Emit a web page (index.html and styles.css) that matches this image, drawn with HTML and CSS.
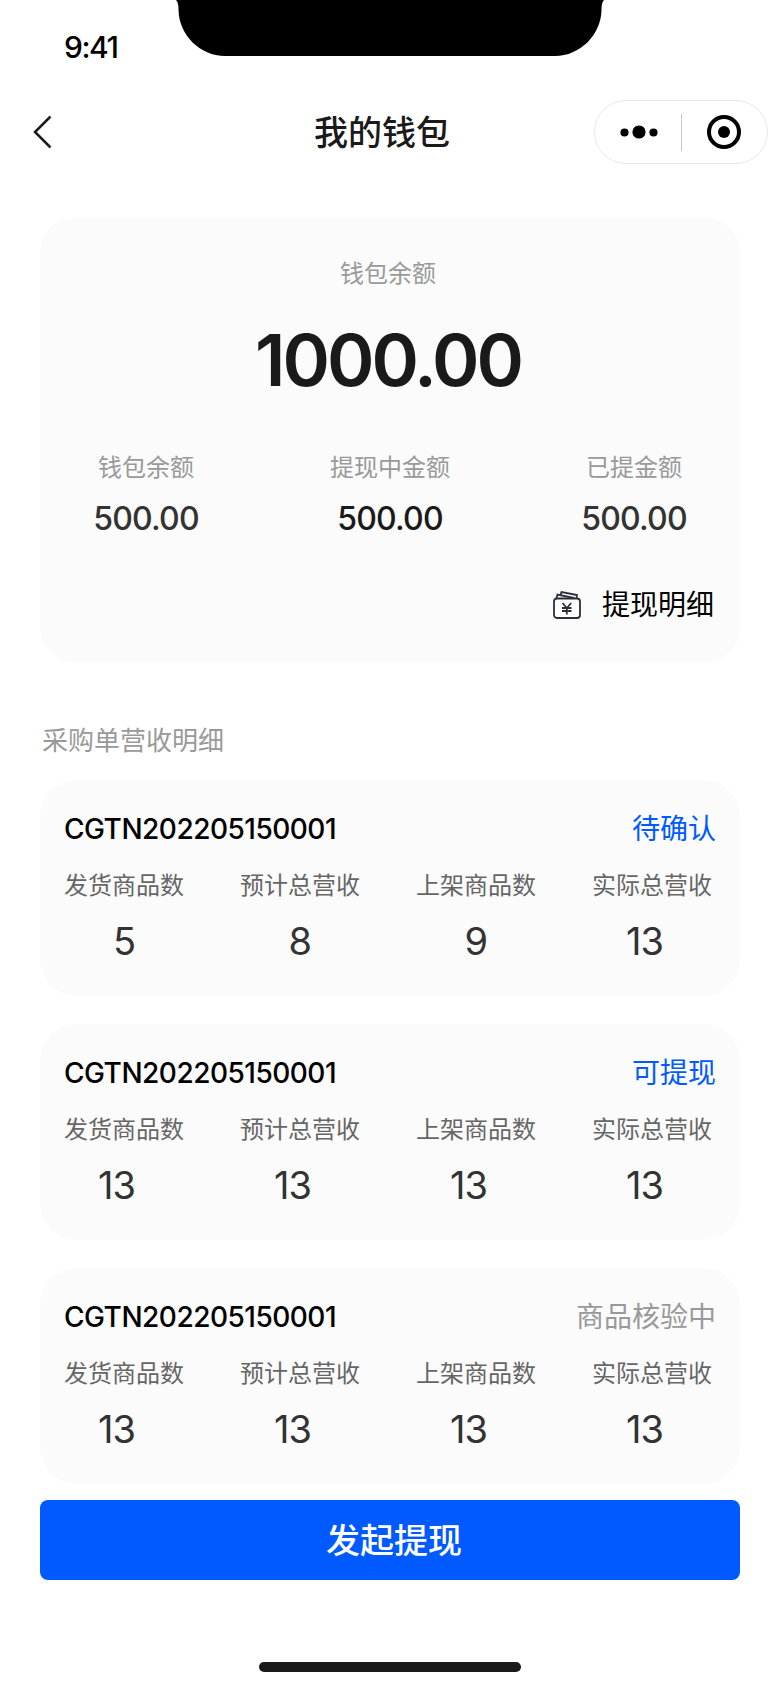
FILE: index.html
```
<!DOCTYPE html>
<html lang="zh-CN">
<head>
    <meta charset="UTF-8">
    <meta name="viewport" content="width=device-width, initial-scale=1.0">
    <title>我的钱包</title>
    <link rel="stylesheet" href="styles.css">
</head>
<body>
    <div class="status-bar">
        <div class="time">9:41</div>
        <svg class="notch" width="428" height="56" viewBox="0 0 428 56">
            <path d="M0 0C2 2 2.500 5 2.500 10C3 35 24 56 49 56H379C404 56 425 35 425.500 10C425.500 5 426 2 428 0Z" fill="#000"/>
        </svg>
    </div>

    <div class="navbar">
        <svg class="back" width="20" height="36" viewBox="0 0 20 36">
            <path d="M17.500 2.500L2 18L17.500 33.500" fill="none" stroke="#1a1a1a" stroke-width="2.500"/>
        </svg>
        <h1>我的钱包</h1>
        <div class="capsule">
            <svg width="38" height="14" viewBox="0 0 38 14">
                <circle cx="4.500" cy="7.500" r="4.100"/>
                <circle cx="19" cy="7" r="6.600"/>
                <circle cx="33.500" cy="7.500" r="4.100"/>
            </svg>
            <div class="line"></div>
            <svg width="36" height="36" viewBox="0 0 36 36">
                <circle cx="18" cy="18" r="15" fill="none" stroke="#000" stroke-width="4"/>
                <circle cx="18" cy="18" r="6"/>
            </svg>
        </div>
    </div>

    <div class="wallet">
        <div class="total">
            <div class="label">钱包余额</div>
            <div class="balance">1000.00</div>
        </div>
        <div class="amounts">
            <div class="amount">
                <div class="label">钱包余额</div>
                <div class="money">500.00</div>
            </div>
            <div class="amount">
                <div class="label">提现中金额</div>
                <div class="money dark">500.00</div>
            </div>
            <div class="amount">
                <div class="label">已提金额</div>
                <div class="money">500.00</div>
            </div>
        </div>
        <div class="detail-link">
            <svg width="28" height="28" viewBox="0 0 28 28" fill="none" stroke="#2b2f38" stroke-width="1.800">
                <rect x="1" y="7.500" width="26" height="19.500" rx="3" fill="#fff"/>
                <path d="M3.500 7L4.500 3.500L21 7M7.500 4L8.500 1L24 4L23.500 7"/>
                <path d="M9.500 12L13.800 17L18.200 12M9 17H18.500M9 20H18.500M13.800 17V23.500"/>
            </svg>
            <span>提现明细</span>
        </div>
    </div>

    <div class="section-title">采购单营收明细</div>

    <div class="order">
        <div class="order-head">
            <div class="order-no">CGTN202205150001</div>
            <div class="state">待确认</div>
        </div>
        <div class="stats">
            <div class="stat">发货商品数<div class="num">5</div></div>
            <div class="stat">预计总营收<div class="num">8</div></div>
            <div class="stat">上架商品数<div class="num">9</div></div>
            <div class="stat">实际总营收<div class="num">13</div></div>
        </div>
    </div>

    <div class="order">
        <div class="order-head">
            <div class="order-no">CGTN202205150001</div>
            <div class="state">可提现</div>
        </div>
        <div class="stats">
            <div class="stat">发货商品数<div class="num">13</div></div>
            <div class="stat">预计总营收<div class="num">13</div></div>
            <div class="stat">上架商品数<div class="num">13</div></div>
            <div class="stat">实际总营收<div class="num">13</div></div>
        </div>
    </div>

    <div class="order">
        <div class="order-head">
            <div class="order-no">CGTN202205150001</div>
            <div class="state checking">商品核验中</div>
        </div>
        <div class="stats">
            <div class="stat">发货商品数<div class="num">13</div></div>
            <div class="stat">预计总营收<div class="num">13</div></div>
            <div class="stat">上架商品数<div class="num">13</div></div>
            <div class="stat">实际总营收<div class="num">13</div></div>
        </div>
    </div>

    <button class="withdraw">发起提现</button>
    <div class="home-bar"></div>
</body>
</html>
```
FILE: styles.css
```
* {
    box-sizing: border-box;
}

body {
    margin: 0;
    width: 780px;
    height: 1688px;
    overflow: hidden;
    background-color: #fff;
    color: #1a1a1a;
    font-family: Inter, "Noto Sans CJK SC", sans-serif;
}

.status-bar {
    display: flex;
    height: 88px;
}

.time {
    width: 176px;
    padding: 29px 0 0 64px;
    font-size: 30px;
    font-weight: 500;
    line-height: 36px;
    letter-spacing: -1.5px;
    color: #000;
}

.notch {
    display: block;
}

/* nav */
.navbar {
    display: grid;
    grid-template-columns: 186px 1fr 186px;
    align-items: center;
    height: 88px;
}

.back {
    margin-left: 33px;
}

h1 {
    margin: 2px 0 0;
    padding-right: 16px;
    font-size: 34px;
    font-weight: 500;
    line-height: 48px;
    text-align: center;
}

.capsule {
    display: flex;
    align-items: center;
    width: 174px;
    height: 64px;
    padding-left: 25px;
    border: 1px solid #e8e8e8;
    border-radius: 32px;
}

.line {
    width: 1px;
    height: 37px;
    margin: 0 24px 0 23px;
    background-color: #c8c8c8;
}

/* balance card */
.wallet {
    height: 444px;
    margin: 42px 40px 0;
    padding-top: 38px;
    background-color: #fbfbfb;
    border-radius: 34px;
}

.total {
    padding-right: 4px;
}

.label {
    font-size: 24px;
    line-height: 36px;
    text-align: center;
    color: #999;
}

.balance {
    margin-top: 24px;
    font-size: 72px;
    font-weight: 600;
    line-height: 88px;
    letter-spacing: -3px;
    text-align: center;
}

.amounts {
    display: grid;
    grid-template-columns: repeat(3, 244px);
    justify-content: center;
    margin-top: 46px;
}

.money {
    margin-top: 13px;
    font-size: 32px;
    font-weight: 500;
    line-height: 40px;
    letter-spacing: -0.8px;
    text-align: center;
    color: #333;
}

.money.dark {
    color: #1a1a1a;
}

.detail-link {
    display: flex;
    align-items: center;
    justify-content: flex-end;
    gap: 21px;
    margin: 46px 26px 0 0;
    font-size: 28px;
    line-height: 40px;
    color: #000;
}

.section-title {
    margin: 61px 0 21px 42px;
    font-size: 26px;
    line-height: 36px;
    color: #999;
}

/* purchase orders */
.order {
    height: 216px;
    margin: 0 40px 28px;
    padding: 29px 24px 0;
    background-color: #fbfbfb;
    border-radius: 36px;
}

.order-head {
    display: flex;
    justify-content: space-between;
    font-size: 28px;
    line-height: 40px;
}

.order-no {
    font-weight: 500;
    letter-spacing: -0.5px;
    color: #000;
}

.state {
    color: #005aff;
}

.state.checking {
    color: #999;
}

.stats {
    display: flex;
    gap: 56px;
    margin-top: 19px;
}

.stat {
    width: 120px;
    font-size: 24px;
    line-height: 36px;
    color: #666;
}

.num {
    margin-top: 13px;
    padding-right: 49px;
    font-size: 38px;
    line-height: 48px;
    letter-spacing: -1px;
    text-align: right;
    color: #333;
}

.withdraw {
    display: block;
    width: 700px;
    height: 80px;
    margin: -12px 40px 0;
    padding: 0 0 4px 8px;
    border: none;
    border-radius: 8px;
    background-color: #005aff;
    color: #fff;
    font-family: inherit;
    font-size: 34px;
    font-weight: 500;
}

.home-bar {
    width: 262px;
    height: 10px;
    margin: 82px auto 0;
    border-radius: 5px;
    background-color: #1a1a1a;
}
```
